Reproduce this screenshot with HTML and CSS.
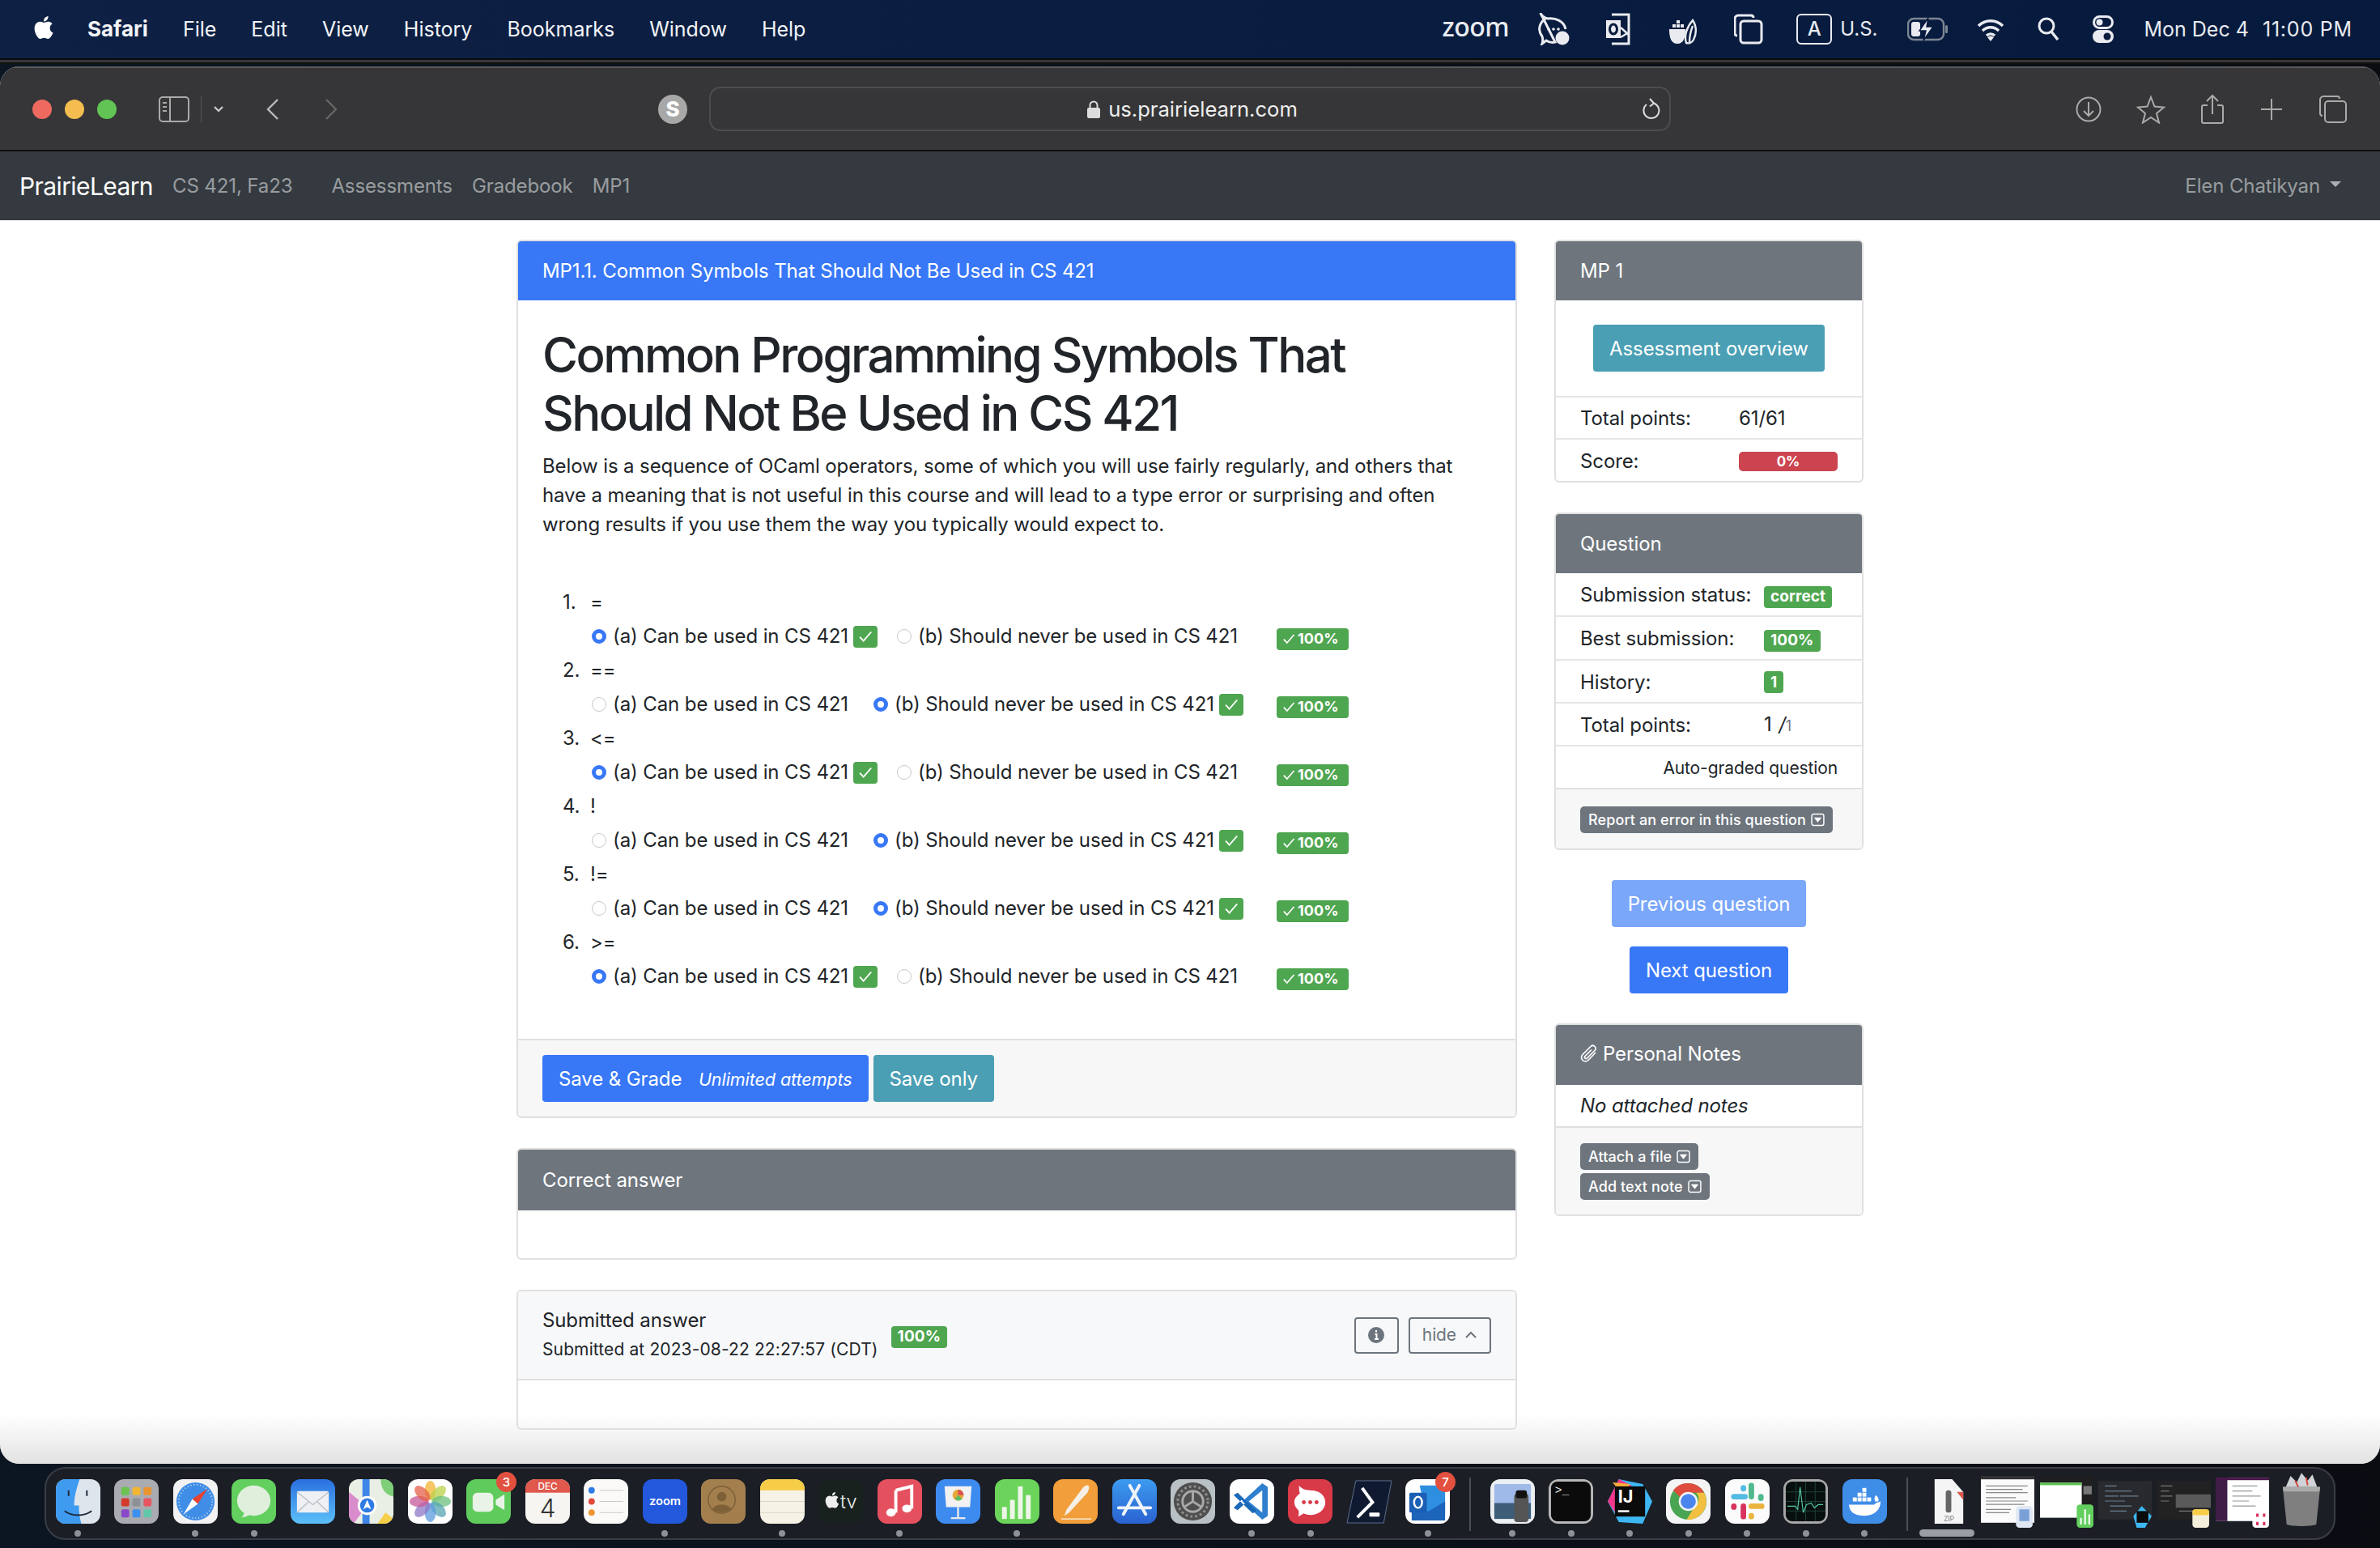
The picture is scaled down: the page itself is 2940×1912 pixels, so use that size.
FILE: index.html
```html
<!DOCTYPE html>
<html lang="en">
<head>
    <meta charset="UTF-8">
    <title>PrairieLearn - MP1.1</title>
    <link rel="stylesheet" href="styles.css">
</head>
<body>
    <svg class="sprite" width="0" height="0">
        <symbol id="tick" viewBox="0 0 16 16"><path d="M2.5 8.5l3.6 4L13.8 3.6" fill="none" stroke="#fff" stroke-width="1.5"/></symbol>
        <symbol id="caretbox" viewBox="0 0 16 16"><rect x="1" y="1.5" width="14" height="13" rx="2" fill="none" stroke="#fff" stroke-width="1.4"/><path d="M3.5 5.500h9L8 11z" fill="#fff"/></symbol>
        <symbol id="apple" viewBox="0 0 24 24"><path d="M12.152 6.896c-.948 0-2.415-1.078-3.96-1.04-2.04.027-3.91 1.183-4.961 3.014-2.117 3.675-.546 9.103 1.519 12.09 1.013 1.454 2.208 3.09 3.792 3.039 1.52-.065 2.09-.987 3.935-.987 1.831 0 2.35.987 3.96.948 1.637-.026 2.676-1.48 3.676-2.948 1.156-1.688 1.636-3.325 1.662-3.415-.039-.013-3.182-1.221-3.22-4.857-.026-3.04 2.48-4.494 2.597-4.559-1.429-2.09-3.623-2.324-4.39-2.376-2-.156-3.675 1.09-4.61 1.09zM15.53 3.83c.843-1.012 1.4-2.427 1.245-3.83-1.207.052-2.662.805-3.532 1.818-.78.896-1.454 2.338-1.273 3.714 1.338.104 2.715-.688 3.559-1.701" fill="currentColor"/></symbol>
    </svg>

    <header class="menubar">
        <svg class="apple"><use href="#apple"/></svg>
        <nav class="menu-left">
            <b>Safari</b><span>File</span><span>Edit</span><span>View</span><span>History</span><span>Bookmarks</span><span>Window</span><span>Help</span>
        </nav>
        <div class="menu-right">
            <span class="zoomword">zoom</span>
            <svg class="mi m-bubble" width="39" height="40" viewBox="0 0 39 40"><path d="M3 1c2 3 5 5 9 6 10-1 20 3 22 13M21 36c-4 1-8 0-11-2l-5 4c1-3 1-6 0-9-3-4-4-8-3-12 1-4 3-7 6-9-2-2-4-4-5-8z" fill="none" stroke="currentColor" stroke-width="3"/><circle cx="13" cy="20" r="1.800" fill="currentColor"/><circle cx="19" cy="20" r="1.800" fill="currentColor"/><circle cx="25" cy="20" r="1.800" fill="currentColor"/><circle cx="30" cy="31" r="8.500" fill="currentColor"/></svg>
            <svg class="mi m-outlook" width="31" height="40" viewBox="0 0 31 40"><path d="M8 2h21v36H8" fill="none" stroke="currentColor" stroke-width="3"/><rect x="1" y="9" width="18" height="22" fill="currentColor"/><ellipse cx="10" cy="20" rx="4.500" ry="6" fill="none" stroke="#0a1c3e" stroke-width="3"/><path d="M19 18l10 9M19 30l10-6" stroke="currentColor" stroke-width="2.500"/></svg>
            <svg class="mi m-leaf" width="36" height="40" viewBox="0 0 36 40"><path d="M1 20h20c0 10-2 18-10 18S1 30 1 20z" fill="currentColor"/><path d="M5 14h4v4H5zM10 14h4v4h-4zM10 9h4v4h-4zM15 14h4v4h-4z" fill="currentColor"/><path d="M30 9c5 8 5 16 1 24-2 4-6 5-9 4-3-9 1-20 8-28zM26 36c0-8 2-15 4-20" fill="none" stroke="currentColor" stroke-width="2.400"/></svg>
            <svg class="mi" width="36" height="38" viewBox="0 0 36 38"><rect x="8" y="9" width="26" height="27" rx="4" fill="none" stroke="currentColor" stroke-width="3"/><path d="M4 27c-2 0-3-1-3-3V6c0-2 2-4 4-4h16c2 0 3 1 3 3" fill="none" stroke="currentColor" stroke-width="3"/></svg>
            <span class="kbd-group"><span class="kbd">A</span><span>U.S.</span></span>
            <svg class="mi m-batt" width="50" height="30" viewBox="0 0 50 30"><rect x="1" y="2" width="44" height="26" rx="7" fill="none" stroke="#7d8694" stroke-width="2.400"/><rect x="47" y="10" width="3" height="10" rx="1.500" fill="#7d8694"/><rect x="5" y="6" width="11" height="18" rx="3" fill="currentColor"/><path d="M26 1L15 17h8l-3 12 12-17h-8z" fill="currentColor" stroke="#0a1c3e" stroke-width="1.500"/></svg>
            <svg class="mi" width="34" height="30" viewBox="0 0 34 30"><path d="M2 11a21 21 0 0130 0M7 17a14 14 0 0120 0M12 23a7 7 0 0110 0" fill="none" stroke="currentColor" stroke-width="3.400"/><path d="M17 30l-4-5a6 6 0 018 0z" fill="currentColor"/></svg>
            <svg class="mi" width="27" height="30" viewBox="0 0 27 30"><circle cx="11" cy="11" r="9" fill="none" stroke="currentColor" stroke-width="3"/><path d="M17 18l8 10" stroke="currentColor" stroke-width="3.400"/></svg>
            <svg class="mi m-ctrl" width="26" height="34" viewBox="0 0 26 34"><rect x="1.500" y="1.500" width="23" height="14" rx="7" fill="none" stroke="currentColor" stroke-width="3"/><circle cx="8.500" cy="8.500" r="4" fill="currentColor"/><rect y="18" width="26" height="16" rx="8" fill="currentColor"/><circle cx="18" cy="26" r="4.500" fill="#0a1c3e"/></svg>
            <span class="clock"><span>Mon Dec 4</span><span class="time">11:00 PM</span></span>
        </div>
    </header>

    <div class="window">
        <div class="toolbar">
            <div class="tb-left">
                <i class="light red"></i><i class="light yellow"></i><i class="light green"></i>
                <svg class="tb-sidebar" width="38" height="32" viewBox="0 0 38 32"><rect x="1" y="1" width="36" height="30" rx="4" fill="none" stroke="#aaa" stroke-width="2"/><path d="M14 1v30" stroke="#aaa" stroke-width="2"/><path d="M5 8h5M5 13h5M5 18h5" stroke="#aaa" stroke-width="2"/></svg>
                <span class="tb-sep"></span>
                <svg class="tb-chev" width="14" height="10" viewBox="0 0 14 10"><path d="M2 2l5 5 5-5" fill="none" stroke="#ccc" stroke-width="2.200"/></svg>
                <svg class="tb-back" width="18" height="28" viewBox="0 0 18 28"><path d="M15 2L3 14l12 12" fill="none" stroke="#bbb" stroke-width="2.400"/></svg>
                <svg class="tb-fwd" width="18" height="28" viewBox="0 0 18 28"><path d="M3 2l12 12L3 26" fill="none" stroke="#666" stroke-width="2.400"/></svg>
                <span class="ext-s">S</span>
            </div>
            <div class="address">
                <span></span>
                <span class="url">
                    <svg width="16" height="22" viewBox="0 0 16 22"><rect y="9" width="16" height="13" rx="2" fill="#ddd"/><path d="M3.500 9V6a4.500 4.500 0 019 0v3" fill="none" stroke="#ddd" stroke-width="2"/></svg>
                    us.prairielearn.com
                </span>
                <svg class="reload" width="24" height="28" viewBox="0 0 24 28"><path d="M15 6.500A9.500 9.500 0 1 1 6 8" fill="none" stroke="#ddd" stroke-width="2"/><path d="M10 1l5 5.500-5 4" fill="none" stroke="#ddd" stroke-width="2"/></svg>
            </div>
            <div class="tb-right">
                <svg width="32" height="34" viewBox="0 0 32 34"><circle cx="16" cy="17" r="14.500" fill="none" stroke="#aaa" stroke-width="2"/><path d="M16 8v17M10 19l6 6 6-6" fill="none" stroke="#aaa" stroke-width="2"/></svg>
                <svg width="36" height="36" viewBox="0 0 36 36"><path d="M18 3l4.500 11.500L34 15.500l-9 7.500 3 11.500-10-6.500-10 6.500 3-11.500-9-7.500 11.500-1z" fill="none" stroke="#aaa" stroke-width="2"/></svg>
                <svg width="30" height="38" viewBox="0 0 30 38"><path d="M9 14H4a2 2 0 00-2 2v18a2 2 0 002 2h22a2 2 0 002-2V16a2 2 0 00-2-2h-5" fill="none" stroke="#aaa" stroke-width="2"/><path d="M15 25V2M8 9l7-7 7 7" fill="none" stroke="#aaa" stroke-width="2"/></svg>
                <svg width="30" height="30" viewBox="0 0 30 30"><path d="M15 2v26M2 15h26" stroke="#aaa" stroke-width="2"/></svg>
                <svg width="36" height="36" viewBox="0 0 36 36"><rect x="8" y="8" width="26" height="26" rx="4" fill="none" stroke="#aaa" stroke-width="2"/><path d="M5 26c-2 0-3-1-3-3V6c0-2 2-4 4-4h17c2 0 3 1 3 3" fill="none" stroke="#aaa" stroke-width="2"/></svg>
            </div>
        </div>

        <nav class="navbar">
            <span class="brand">PrairieLearn</span>
            <span class="nav-course">CS 421, Fa23</span>
            <span class="nav-link">Assessments</span>
            <span class="nav-link">Gradebook</span>
            <span class="nav-link">MP1</span>
            <span class="nav-user">Elen Chatikyan <i class="caret"></i></span>
        </nav>

        <main class="page">
            <section class="col-main">
                <div class="card">
                    <div class="card-header blue">MP1.1. Common Symbols That Should Not Be Used in CS 421</div>
                    <div class="card-body question">
                        <h1>Common Programming Symbols That Should Not Be Used in CS 421</h1>
                        <p>Below is a sequence of OCaml operators, some of which you will use fairly regularly, and others that have a meaning that is not useful in this course and will lead to a type error or surprising and often wrong results if you use them the way you typically would expect to.</p>
                        <ol class="symbols">
                            <li>=
                                <div class="opt-row">
                                    <div class="opts">
                                        <label class="opt has-check"><i class="radio on"></i>(a) Can be used in CS 421<span class="checkbox"><svg><use href="#tick"/></svg></span></label>
                                        <label class="opt"><i class="radio"></i>(b) Should never be used in CS 421</label>
                                    </div>
                                    <span class="badge score"><svg><use href="#tick"/></svg>100%</span>
                                </div>
                            </li>
                            <li>==
                                <div class="opt-row">
                                    <div class="opts">
                                        <label class="opt"><i class="radio"></i>(a) Can be used in CS 421</label>
                                        <label class="opt has-check"><i class="radio on"></i>(b) Should never be used in CS 421<span class="checkbox"><svg><use href="#tick"/></svg></span></label>
                                    </div>
                                    <span class="badge score"><svg><use href="#tick"/></svg>100%</span>
                                </div>
                            </li>
                            <li>&lt;=
                                <div class="opt-row">
                                    <div class="opts">
                                        <label class="opt has-check"><i class="radio on"></i>(a) Can be used in CS 421<span class="checkbox"><svg><use href="#tick"/></svg></span></label>
                                        <label class="opt"><i class="radio"></i>(b) Should never be used in CS 421</label>
                                    </div>
                                    <span class="badge score"><svg><use href="#tick"/></svg>100%</span>
                                </div>
                            </li>
                            <li>!
                                <div class="opt-row">
                                    <div class="opts">
                                        <label class="opt"><i class="radio"></i>(a) Can be used in CS 421</label>
                                        <label class="opt has-check"><i class="radio on"></i>(b) Should never be used in CS 421<span class="checkbox"><svg><use href="#tick"/></svg></span></label>
                                    </div>
                                    <span class="badge score"><svg><use href="#tick"/></svg>100%</span>
                                </div>
                            </li>
                            <li>!=
                                <div class="opt-row">
                                    <div class="opts">
                                        <label class="opt"><i class="radio"></i>(a) Can be used in CS 421</label>
                                        <label class="opt has-check"><i class="radio on"></i>(b) Should never be used in CS 421<span class="checkbox"><svg><use href="#tick"/></svg></span></label>
                                    </div>
                                    <span class="badge score"><svg><use href="#tick"/></svg>100%</span>
                                </div>
                            </li>
                            <li>&gt;=
                                <div class="opt-row">
                                    <div class="opts">
                                        <label class="opt has-check"><i class="radio on"></i>(a) Can be used in CS 421<span class="checkbox"><svg><use href="#tick"/></svg></span></label>
                                        <label class="opt"><i class="radio"></i>(b) Should never be used in CS 421</label>
                                    </div>
                                    <span class="badge score"><svg><use href="#tick"/></svg>100%</span>
                                </div>
                            </li>
                        </ol>
                    </div>
                    <div class="card-footer main-footer">
                        <button class="btn primary">Save &amp; Grade <em>Unlimited attempts</em></button>
                        <button class="btn info">Save only</button>
                    </div>
                </div>

                <div class="card">
                    <div class="card-header grey answer-head">Correct answer</div>
                    <div class="empty-body"></div>
                </div>

                <div class="card">
                    <div class="submitted-header">
                        <div>
                            <div class="sub-title">Submitted answer</div>
                            <div class="sub-time">Submitted at 2023-08-22 22:27:57 (CDT)</div>
                        </div>
                        <span class="badge sub-badge">100%</span>
                        <span class="btn-outline info-btn"><svg width="20" height="20" viewBox="0 0 20 20"><circle cx="10" cy="10" r="10" fill="#6c757d"/><path d="M10 4v2.500M8.500 9H10.500V15M8 15h5" stroke="#fff" stroke-width="2" fill="none"/></svg></span>
                        <span class="btn-outline">hide <svg width="16" height="10" viewBox="0 0 16 10"><path d="M2 8l6-6 6 6" fill="none" stroke="#6c757d" stroke-width="2"/></svg></span>
                    </div>
                    <div class="empty-body"></div>
                </div>
            </section>

            <aside class="col-side">
                <div class="card">
                    <div class="card-header grey">MP 1</div>
                    <div class="overview"><button class="btn info">Assessment overview</button></div>
                    <div class="row row-a"><span class="k">Total points:</span><span>61/61</span></div>
                    <div class="row row-a"><span class="k">Score:</span><span class="scorebar">0%</span></div>
                </div>

                <div class="card">
                    <div class="card-header grey">Question</div>
                    <div class="row row-b tall"><span class="k">Submission status:</span><span class="badge">correct</span></div>
                    <div class="row row-b tall"><span class="k">Best submission:</span><span class="badge">100%</span></div>
                    <div class="row row-b"><span class="k">History:</span><span class="badge">1</span></div>
                    <div class="row row-b"><span class="k">Total points:</span><span>1 <i class="of">/</i><small>1</small></span></div>
                    <div class="row auto-graded">Auto-graded question</div>
                    <div class="card-footer side-footer">
                        <span class="btn-xs">Report an error in this question <svg><use href="#caretbox"/></svg></span>
                    </div>
                </div>

                <div class="qnav">
                    <button class="btn primary disabled">Previous question</button>
                    <button class="btn primary">Next question</button>
                </div>

                <div class="card">
                    <div class="card-header grey notes-head">
                        <svg width="22" height="24" viewBox="0 0 22 24"><path d="M19 10l-9 9.500c-2 2-5 2-7 0s-2-5 0-7L13 2.500c1.500-1.500 3.500-1.500 5 0s1.500 3.500 0 5L8.500 17c-.8.800-1.800.8-2.500 0-.7-.7-.7-1.700 0-2.500L14 6.500" fill="none" stroke="#fff" stroke-width="1.700"/></svg>
                        Personal Notes
                    </div>
                    <div class="row no-notes">No attached notes</div>
                    <div class="card-footer side-footer notes-foot">
                        <span class="btn-xs">Attach a file <svg><use href="#caretbox"/></svg></span>
                        <span class="btn-xs">Add text note <svg><use href="#caretbox"/></svg></span>
                    </div>
                </div>
            </aside>
        </main>
        <div class="window-fade"></div>
    </div>

    <footer class="dock">
        <div class="dock-item on"><svg class="app" viewBox="0 0 56 56"><rect width="56" height="56" fill="#dfe5ec"/><path d="M0 0h30c-4 12-7 22-7 33h6c0 8 1 16 3 23H0z" fill="#3f9bf0"/><path d="M16 14v7M39 14v7" stroke="#1c2a3a" stroke-width="2"/><path d="M11 40c9 7 25 7 34 0" fill="none" stroke="#1c2a3a" stroke-width="2"/></svg><i></i></div>
        <div class="dock-item"><svg class="app" viewBox="0 0 56 56"><rect width="56" height="56" fill="#a9abb0"/><rect x="9" y="10" width="10" height="10" rx="2" fill="#69c34e"/><rect x="23" y="10" width="10" height="10" rx="2" fill="#f2b632"/><rect x="37" y="10" width="10" height="10" rx="2" fill="#ea9430"/><rect x="9" y="24" width="10" height="10" rx="2" fill="#d43a2c"/><rect x="23" y="24" width="10" height="10" rx="2" fill="#8d9196"/><rect x="37" y="24" width="10" height="10" rx="2" fill="#e75560"/><rect x="9" y="38" width="10" height="10" rx="2" fill="#8a49c9"/><rect x="23" y="38" width="10" height="10" rx="2" fill="#3d90ee"/><rect x="37" y="38" width="10" height="10" rx="2" fill="#62c7a8"/></svg><i class="off"></i></div>
        <div class="dock-item on"><svg class="app" viewBox="0 0 56 56"><rect width="56" height="56" fill="#f2f2f2"/><circle cx="28" cy="28" r="24" fill="#3f8de6"/><circle cx="28" cy="28" r="21" fill="none" stroke="#cfe3f8" stroke-width="2" stroke-dasharray="1 3"/><path d="M43 12L24 25l7 6z" fill="#e8412f"/><path d="M13 44l11-19 7 6z" fill="#fff"/></svg><i></i></div>
        <div class="dock-item on"><svg class="app" viewBox="0 0 56 56"><rect width="56" height="56" fill="#62cf5e"/><ellipse cx="28" cy="27" rx="21" ry="19" fill="#dfefdc"/><path d="M16 40c0 4-1 7-4 8 5 0 9-2 12-4z" fill="#dfefdc"/></svg><i></i></div>
        <div class="dock-item"><svg class="app" viewBox="0 0 56 56"><defs><linearGradient id="mailbg" x1="0" y1="0" x2="0" y2="1"><stop offset="0" stop-color="#2a6fe0"/><stop offset="1" stop-color="#5cc0f8"/></linearGradient></defs><rect width="56" height="56" fill="url(#mailbg)"/><rect x="8" y="15" width="40" height="27" rx="2" fill="#eef0f3"/><path d="M8 16l20 16 20-16M8 42l15-14M48 42L33 28" fill="none" stroke="#b7bcc4" stroke-width="1.200"/></svg><i class="off"></i></div>
        <div class="dock-item"><svg class="app" viewBox="0 0 56 56"><rect width="56" height="56" fill="#e9efe4"/><path d="M0 16l22 18L6 56H0z" fill="#d98ccc"/><path d="M36 56l10-14 10 8v6z" fill="#f5cf48"/><path d="M40 0c0 12 6 20 16 22V0z" fill="#7fcf78"/><path d="M17 0h9v56h-9z" fill="#3f86e8"/><circle cx="23" cy="33" r="12" fill="#fff"/><circle cx="23" cy="33" r="9" fill="#2f7be4"/><path d="M23 26l-5 12 5-3 5 3z" fill="#fff"/></svg><i class="off"></i></div>
        <div class="dock-item"><svg class="app" viewBox="0 0 56 56"><rect width="56" height="56" fill="#fff"/><g transform="translate(28 28)" fill-opacity=".75"><ellipse cy="-14" rx="7" ry="12" fill="#f2b632"/><ellipse cy="-14" rx="7" ry="12" fill="#b9d24a" transform="rotate(45)"/><ellipse cy="-14" rx="7" ry="12" fill="#6cc07e" transform="rotate(90)"/><ellipse cy="-14" rx="7" ry="12" fill="#57a5b2" transform="rotate(135)"/><ellipse cy="-14" rx="7" ry="12" fill="#5c9ade" transform="rotate(180)"/><ellipse cy="-14" rx="7" ry="12" fill="#8e77c5" transform="rotate(225)"/><ellipse cy="-14" rx="7" ry="12" fill="#c5589a" transform="rotate(270)"/><ellipse cy="-14" rx="7" ry="12" fill="#e5604a" transform="rotate(315)"/></g></svg><i class="off"></i></div>
        <div class="dock-item"><svg class="app" viewBox="0 0 56 56"><rect width="56" height="56" fill="#5fcb5c"/><rect x="8" y="17" width="26" height="24" rx="6" fill="#e9f3e7"/><path d="M37 26l11-7v20l-11-7z" fill="#e9f3e7"/></svg><b class="dock-badge">3</b><i class="off"></i></div>
        <div class="dock-item"><svg class="app" viewBox="0 0 56 56"><rect width="56" height="56" fill="#f7f5f2"/><rect width="56" height="17" fill="#e0594c"/><text x="28" y="13" class="t-dec">DEC</text><text x="28" y="48" class="t-day">4</text></svg><i class="off"></i></div>
        <div class="dock-item"><svg class="app" viewBox="0 0 56 56"><rect width="56" height="56" fill="#fbfaf8"/><circle cx="10" cy="14" r="4" fill="#2e7de6"/><circle cx="10" cy="28" r="4" fill="#e24a3b"/><circle cx="10" cy="42" r="4" fill="#ee9732"/><path d="M20 14h30M20 28h30M20 42h30" stroke="#c9c9c9" stroke-width="1.200"/></svg><i class="off"></i></div>
        <div class="dock-item on"><svg class="app" viewBox="0 0 56 56"><rect width="56" height="56" fill="#2358dc"/><text x="28" y="33" class="t-zoom">zoom</text></svg><i></i></div>
        <div class="dock-item"><svg class="app book" viewBox="0 0 56 56"><rect width="56" height="56" fill="#a47f4e"/><circle cx="26" cy="26" r="17" fill="none" stroke="#7e6038" stroke-width="1.500"/><circle cx="26" cy="22" r="6" fill="#7e6038"/><path d="M14 38c3-8 21-8 24 0-6 5-18 5-24 0z" fill="#7e6038"/></svg><i class="off"></i></div>
        <div class="dock-item on"><svg class="app" viewBox="0 0 56 56"><rect width="56" height="56" fill="#f6f3e6"/><rect width="56" height="14" fill="#f7cd47"/><path d="M0 28h56M0 42h56" stroke="#d8d5c9" stroke-width="1"/></svg><i></i></div>
        <div class="dock-item"><svg class="app" viewBox="0 0 56 56"><rect width="56" height="56" fill="#18211e"/><g transform="translate(7 16) scale(.85)" color="#eee"><use href="#apple" width="24" height="24"/></g><text x="38" y="37" class="t-tv">tv</text></svg><i class="off"></i></div>
        <div class="dock-item on"><svg class="app" viewBox="0 0 56 56"><rect width="56" height="56" fill="#e5505f"/><path d="M23 14l20-5v28" fill="none" stroke="#fff" stroke-width="4"/><ellipse cx="17" cy="42" rx="6" ry="5" fill="#fff"/><ellipse cx="37" cy="37" rx="6" ry="5" fill="#fff"/><path d="M23 14v28" stroke="#fff" stroke-width="4"/></svg><i></i></div>
        <div class="dock-item"><svg class="app" viewBox="0 0 56 56"><rect width="56" height="56" fill="#3e8bf0"/><path d="M28 35v13M19 49h18" stroke="#e8e8e8" stroke-width="2.500"/><path d="M11 9h34l-2 26H13z" fill="#f2f2f2"/><circle cx="28" cy="20" r="7" fill="#e6a83a"/><path d="M28 13a7 7 0 017 7h-7z" fill="#d9534f"/><path d="M28 20l5 5a7 7 0 01-9 0z" fill="#5dbb63"/></svg><i class="off"></i></div>
        <div class="dock-item on"><svg class="app" viewBox="0 0 56 56"><rect width="56" height="56" fill="#6bd45a"/><rect x="9" y="35" width="6" height="15" fill="#eef6ea"/><rect x="19" y="26" width="6" height="24" fill="#eef6ea"/><rect x="29" y="9" width="6" height="41" fill="#eef6ea"/><rect x="39" y="20" width="6" height="30" fill="#eef6ea"/></svg><i></i></div>
        <div class="dock-item"><svg class="app" viewBox="0 0 56 56"><rect width="56" height="56" fill="#f29e3a"/><path d="M44 8c2 2 1 5-1 9L20 42l-6 4 3-8L38 10c2-2 4-3 6-2z" fill="#f5efe6"/><path d="M10 50h38" stroke="#f7ddb8" stroke-width="2"/></svg><i class="off"></i></div>
        <div class="dock-item"><svg class="app" viewBox="0 0 56 56"><defs><linearGradient id="storebg" x1="0" y1="0" x2="0" y2="1"><stop offset="0" stop-color="#3c9bf0"/><stop offset="1" stop-color="#2a62d0"/></linearGradient></defs><rect width="56" height="56" fill="url(#storebg)"/><path d="M22 8l20 36M34 8L14 44M8 36h40" stroke="#eef3fa" stroke-width="4" stroke-linecap="round"/></svg><i class="off"></i></div>
        <div class="dock-item"><svg class="app" viewBox="0 0 56 56"><rect width="56" height="56" fill="#b9c1c5"/><circle cx="28" cy="28" r="24" fill="#4f4f4f"/><circle cx="28" cy="28" r="19" fill="none" stroke="#8f8f8f" stroke-width="3" stroke-dasharray="3 3"/><circle cx="28" cy="28" r="13" fill="none" stroke="#a8a8a8" stroke-width="3"/><path d="M28 28V15M28 28l11 7M28 28l-11 7" stroke="#a8a8a8" stroke-width="3"/></svg><i class="off"></i></div>
        <div class="dock-item on"><svg class="app" viewBox="0 0 56 56"><rect width="56" height="56" fill="#fff"/><path d="M41 5l7 5v36l-7 5-25-23z" fill="#2f7fce"/><path d="M41 14v28L24 28z" fill="#fff"/><path d="M5 20l5-3 24 23-5 3zM5 36l5 3 10-9-5-4z" fill="#1c69b8"/></svg><i></i></div>
        <div class="dock-item on"><svg class="app" viewBox="0 0 56 56"><rect width="56" height="56" fill="#d93a48"/><path d="M14 8c3 4 7 6 14 6 11 0 19 6 19 15s-8 16-19 16c-4 0-6-1-8-2l-7 4c1-4 1-6 0-8-3-3-5-6-5-10 0-5 3-8 7-11-1-3-1-6-1-10z" fill="#fff"/><circle cx="20" cy="29" r="2.500" fill="#d93a48"/><circle cx="28" cy="29" r="2.500" fill="#d93a48"/><circle cx="36" cy="29" r="2.500" fill="#d93a48"/></svg><i></i></div>
        <div class="dock-item"><svg class="app plain" viewBox="0 0 56 56"><path d="M11 2h45l-10 53H0z" fill="#0f1a30" stroke="#5d6e8f"/><path d="M19 11l13 18-19 19" fill="none" stroke="#fff" stroke-width="4"/><rect x="28" y="42" width="13" height="5" rx="1" fill="#fff"/></svg><i class="off"></i></div>
        <div class="dock-item on"><svg class="app" viewBox="0 0 56 56"><rect width="56" height="56" fill="#fff"/><path d="M18 8h32v36H26z" fill="#2e8fe0"/><path d="M8 28l20 13 22-13v24H8z" fill="#1d64bb"/><rect x="5" y="17" width="22" height="25" rx="2" fill="#1a5fb4"/><ellipse cx="16" cy="29" rx="5" ry="7" fill="none" stroke="#fff" stroke-width="2.500"/></svg><b class="dock-badge">7</b><i></i></div>
        <div class="dock-sep"></div>
        <div class="dock-item on"><svg class="app" viewBox="0 0 56 56"><rect width="56" height="56" fill="#eceff2"/><rect x="5" y="6" width="46" height="44" rx="2" fill="#9fb9e8"/><rect x="5" y="30" width="46" height="20" fill="#3d5d78"/><rect x="30" y="18" width="18" height="36" rx="4" fill="#555"/><rect x="32" y="14" width="14" height="10" rx="3" fill="#111"/></svg><i></i></div>
        <div class="dock-item on"><svg class="app" viewBox="0 0 56 56"><rect width="56" height="56" fill="#b8b8b8"/><rect x="3" y="3" width="50" height="50" rx="8" fill="#0b0b0b"/><text x="8" y="18" class="t-term">&gt;_</text></svg><i></i></div>
        <div class="dock-item on"><svg class="app plain ij" viewBox="0 0 56 56"><path d="M14 0l30 6 12 22-12 28-30-2L0 28z" fill="#3db7f2"/><path d="M14 0l16 8L12 46 0 28z" fill="#f2378c"/><path d="M6 4l22 2-8 14z" fill="#fbb03b"/><rect x="9" y="9" width="38" height="38" fill="#0b0b0b"/><text x="13" y="30" class="t-ij">IJ</text><rect x="13" y="39" width="14" height="2.500" fill="#fff"/></svg><i></i></div>
        <div class="dock-item on"><svg class="app" viewBox="0 0 56 56"><rect width="56" height="56" fill="#f4f4f4"/><circle cx="28" cy="28" r="23" fill="#4aa553"/><path d="M28 5a23 23 0 0120 12H28a11 11 0 00-10 6L9 14A23 23 0 0128 5z" fill="#de4c3e"/><path d="M48 17a23 23 0 01-22 34l10-17a11 11 0 002-17z" fill="#f4c042"/><circle cx="28" cy="28" r="12" fill="#f4f4f4"/><circle cx="28" cy="28" r="9.500" fill="#4a85ee"/></svg><i></i></div>
        <div class="dock-item on"><svg class="app" viewBox="0 0 56 56"><rect width="56" height="56" fill="#fbfbfb"/><path d="M33 8v14M45 22v2" stroke="#4fb88c" stroke-width="7" stroke-linecap="round"/><path d="M11 22h14M23 11v1" stroke="#53bce4" stroke-width="7" stroke-linecap="round"/><path d="M23 34v13M11 34v1" stroke="#d8335c" stroke-width="7" stroke-linecap="round"/><path d="M33 34h13M33 46v1" stroke="#e9b440" stroke-width="7" stroke-linecap="round"/></svg><i></i></div>
        <div class="dock-item on"><svg class="app" viewBox="0 0 56 56"><rect width="56" height="56" fill="#a8a8a8"/><rect x="3" y="3" width="50" height="50" rx="8" fill="#07100e"/><path d="M3 16h50M3 28h50M3 40h50M16 3v50M28 3v50M40 3v50" stroke="#1e4038" stroke-width="1"/><path d="M5 34h10l3 4 3-28 4 32 4-10 6-2 4 6 5-4h6" fill="none" stroke="#55c7a0" stroke-width="1.200"/></svg><i></i></div>
        <div class="dock-item on"><svg class="app" viewBox="0 0 56 56"><rect width="56" height="56" fill="#3e8de6"/><path d="M8 32h32c2-3 6-3 8-4 0 10-8 18-20 18S9 42 8 32z" fill="#fff"/><g fill="#fff"><rect x="13" y="23" width="5" height="5"/><rect x="19" y="23" width="5" height="5"/><rect x="25" y="23" width="5" height="5"/><rect x="31" y="23" width="5" height="5"/><rect x="19" y="17" width="5" height="5"/><rect x="25" y="17" width="5" height="5"/><rect x="25" y="11" width="5" height="5"/></g><path d="M42 20c3 2 4 5 3 8h-4c-1-3-1-6 1-8z" fill="#fff"/></svg><i></i></div>
        <div class="dock-sep"></div>
        <div class="dock-item"><svg class="app plain" viewBox="0 0 56 56"><path d="M10 0h22l14 16v40H10z" fill="#f5f5f5"/><path d="M10 16h36v10l-8-10H10z" fill="#d9574a"/><rect x="24" y="14" width="7" height="28" rx="3" fill="#666"/><text x="28" y="53" class="t-zip">ZIP</text></svg><span class="stack-pill"></span></div>
        <div class="dock-item"><svg class="app plain thumb" viewBox="0 0 64 64"><rect y="2" width="64" height="6" fill="#333"/><rect y="6" width="64" height="52" fill="#fafafa"/><path d="M6 14h50M6 18h44M6 22h50M6 28h36M6 32h50M6 36h46M6 42h30M6 46h28" stroke="#888" stroke-width="1.200"/><rect x="42" y="38" width="20" height="26" rx="4" fill="#dfe7f3"/><rect x="46" y="42" width="12" height="14" fill="#7ba0d8"/></svg><i class="off"></i></div>
        <div class="dock-item"><svg class="app plain thumb" viewBox="0 0 64 64"><rect y="2" width="64" height="50" fill="#1f1f1f"/><rect y="10" width="50" height="42" fill="#fff"/><rect y="10" width="50" height="3" fill="#5dc24f"/><rect x="52" y="14" width="10" height="10" fill="#777"/><rect x="44" y="36" width="20" height="28" rx="4" fill="#62cf5e"/><path d="M49 60v-8M54 60V42M59 60V48" stroke="#fff" stroke-width="2"/></svg><i class="off"></i></div>
        <div class="dock-item"><svg class="app plain thumb" viewBox="0 0 64 64"><rect y="8" width="64" height="46" fill="#282a2e"/><path d="M8 14h14M8 20h20M8 26h16M8 32h24M26 20h14M26 26h22M14 38h26M14 44h20" stroke="#6c7f8e" stroke-width="1.200"/><path d="M42 50l10-12 12 12-8 14H46z" fill="#3db7f2"/><rect x="46" y="44" width="14" height="14" fill="#0b0b0b"/></svg><i class="off"></i></div>
        <div class="dock-item"><svg class="app plain thumb" viewBox="0 0 64 64"><rect y="8" width="64" height="46" fill="#222"/><rect x="22" y="24" width="42" height="16" fill="#5a5a5a"/><path d="M4 14h14M4 20h10M4 26h14M4 32h10M26 44h30" stroke="#777" stroke-width="1.200"/><rect x="42" y="42" width="20" height="22" rx="4" fill="#f4efdc"/><rect x="42" y="42" width="20" height="7" rx="3" fill="#f7cd47"/></svg><i class="off"></i></div>
        <div class="dock-item"><svg class="app plain thumb" viewBox="0 0 64 64"><rect y="4" width="64" height="52" fill="#fff"/><rect y="4" width="14" height="52" fill="#3f1d47"/><rect y="4" width="64" height="3" fill="#4a154b"/><path d="M20 14h30M20 20h24M20 26h34M20 32h20M20 38h28" stroke="#999" stroke-width="1.200"/><rect x="44" y="42" width="20" height="22" rx="4" fill="#fff"/><path d="M50 47v4M58 47v4M50 57v4M58 57v4" stroke="#d8335c" stroke-width="3"/></svg><i class="off"></i></div>
        <div class="dock-item"><svg class="app plain trash" viewBox="0 0 56 72"><path d="M4 20h48l-5 48c-4 3-34 3-38 0z" fill="#7f7f7f"/><path d="M4 20h48l-1 6H5z" fill="#aaa"/><path d="M8 20l6-14 8 8 6-12 8 10 6-8 6 16z" fill="#cfd2d6"/><path d="M20 12l4 8M34 8l2 10" stroke="#d8423a" stroke-width="2"/></svg><i class="off"></i></div>
    </footer>
</body>
</html>
```

FILE: styles.css
```css
* { box-sizing: border-box; }
html, body { margin: 0; padding: 0; }
body { width: 2940px; height: 1912px; overflow: hidden; font-family: Inter, "Liberation Sans", sans-serif; font-size: 24px; line-height: 36px; letter-spacing: -.11px; color: #212529; background: linear-gradient(90deg, #0b1622, #0a0c12); }
.sprite { position: absolute; }
button { font-family: inherit; letter-spacing: inherit; }

/* mac menu bar */
.menubar { height: 72px; display: flex; align-items: center; padding-left: 40px; background: linear-gradient(90deg, #0e2144, #061a3d); color: #f2f4f8; font-size: 25px; letter-spacing: 0; }
.apple { width: 28px; height: 34px; color: #fff; margin-right: 40px; margin-top: -4px; }
.menu-left { display: flex; gap: 43px; }
.menu-left b { font-weight: 700; font-size: 26px; }
.menu-right { margin-left: auto; display: flex; align-items: center; gap: 41px; padding-right: 34px; color: #e9ebf0; }
.zoomword { font-family: "Noto Sans", sans-serif; font-size: 32px; font-weight: 500; margin-top: -6px; margin-right: -5px; letter-spacing: -.5px; }
.m-outlook { margin-left: 3px; }
.m-leaf { margin-left: 6px; margin-right: 4px; }
.m-batt { margin-left: -4px; margin-right: -5px; }
.kbd-group { display: flex; align-items: center; gap: 10px; font-size: 24px; }
.kbd { width: 44px; height: 38px; border: 2px solid #e9ebf0; border-radius: 6px; display: flex; align-items: center; justify-content: center; font-size: 24px; font-weight: 500; }
.clock { display: flex; gap: 17px; margin-left: -4px; }
.time { letter-spacing: .8px; }

/* browser window */
.window { position: relative; height: 1726px; margin-top: 10px; border-radius: 24px; overflow: hidden; background: #fff; }
.menubar { box-shadow: 0 2px 0 #0b0b0d, 0 5px 0 #37373a, 0 7px 0 #111; position: relative; z-index: 2; }
.toolbar { height: 105px; display: flex; align-items: center; background: #363638; border-top: 2px solid #5a5a5c; border-bottom: 2px solid #0f0f10; }
.tb-left { width: 876px; display: flex; align-items: center; padding-left: 40px; }
.light { width: 24px; height: 24px; border-radius: 50%; margin-right: 16px; }
.red { background: #ee6a5f; }
.yellow { background: #f5bd4f; }
.green { background: #61c454; }
.tb-sidebar { margin-left: 36px; }
.tb-sep { width: 1px; height: 34px; background: #555; margin: 0 14px; }
.tb-chev { margin-right: 50px; }
.tb-back { margin-left: 1px; }
.tb-fwd { margin-left: 54px; }
.ext-s { width: 36px; height: 36px; margin-left: 395px; border-radius: 50%; background: #a8a8a8; color: #fff; font-weight: 800; font-size: 26px; line-height: 36px; text-align: center; }
.address { width: 1188px; height: 55px; border: 2px solid #4d4d4f; border-radius: 14px; display: grid; grid-template-columns: 1fr auto 1fr; align-items: center; color: #eee; font-size: 25.600px; padding-right: 10px; letter-spacing: 0; }
.url { display: flex; align-items: center; gap: 10px; margin-left: 16px; }
.reload { justify-self: end; }
.tb-right { display: flex; align-items: center; gap: 43px; padding-left: 500px; }

/* navbar */
.navbar { height: 85px; display: flex; align-items: center; background: #343a40; padding: 0 24px; color: rgba(255,255,255,.5); }
.brand { color: #fff; font-size: 30px; margin-right: 24px; letter-spacing: -.6px; }
.nav-course { margin-right: 48px; }
.nav-link { margin-right: 24px; }
.nav-user { margin-left: auto; margin-right: 24px; display: flex; align-items: center; gap: 12px; }
.caret { width: 0; height: 0; border: 7px solid transparent; border-top-color: rgba(255,255,255,.6); border-bottom: 0; margin-top: -4px; }

/* page columns */
.page { display: flex; gap: 46px; padding: 24px 0 0 638px; }
.col-main { width: 1236px; display: flex; flex-direction: column; gap: 37px; }
.col-side { width: 382px; display: flex; flex-direction: column; gap: 37px; }

.card { border: 2px solid #e0e0e0; border-radius: 6px; background: #fff; overflow: hidden; }
.card-header { height: 73px; padding: 0 30px; display: flex; align-items: center; color: #fff; }
.blue { background: #3878f7; }
.grey { background: #6e757d; }
.card-footer { background: #f7f7f7; border-top: 2px solid #e0e0e0; }
.empty-body { height: 59px; }
.answer-head { height: 75px; }

.question { padding: 31px 30px 56px; }
h1 { margin: 0 0 12px; font-size: 60px; line-height: 72px; font-weight: 500; width: 1100px; letter-spacing: -2.550px; }
.question p { margin: 0 0 57px; }
.symbols { margin: 0; padding-left: 61px; line-height: 42px; list-style: none; counter-reset: sym; }
.symbols li { counter-increment: sym; }
.symbols li::before { content: counter(sym) "."; display: inline-block; width: 34px; margin-left: -36px; }
.opt-row { display: flex; align-items: center; height: 42px; }
.opts { width: 846px; display: flex; align-items: center; }
.opt { display: flex; align-items: center; margin-right: 31px; }
.has-check { margin-right: 24px; }
.radio { width: 18px; height: 18px; border-radius: 50%; border: 1px solid #c8c8c8; margin-right: 8px; background: #fff; }
.radio.on { border: 5px solid #3878f7; }
.checkbox { width: 30px; height: 27px; margin-left: 6px; background: #4fa650; border-radius: 4px; display: flex; align-items: center; justify-content: center; }
.checkbox svg { width: 20px; height: 20px; }

.badge { display: inline-block; padding: 4.500px 8px; font-size: 19px; font-weight: 700; line-height: 18px; letter-spacing: .1px; color: #fff; background: #4fa650; border-radius: 4px; }
.score { display: flex; align-items: center; gap: 2px; width: 89px; height: 27px; margin-top: 6px; padding: 0 6px; white-space: nowrap; font-size: 18px; }
.score svg { width: 18px; height: 18px; flex: none; }

.btn { height: 58px; border: 0; border-radius: 4px; padding: 0 20px; font-size: 24px; color: #fff; }
.primary { background: #3878f7; }
.info { background: #4b9fb4; }
.disabled { background: #7ba7fa; }
.main-footer { height: 96px; display: flex; align-items: center; gap: 6px; padding: 0 30px; }
.main-footer em { font-size: 21.600px; margin-left: 14px; }

.submitted-header { height: 110px; display: flex; align-items: center; padding: 0 30px; background: #f7f8f9; border-bottom: 2px solid #e0e0e0; }
.sub-title { line-height: 36px; }
.sub-time { font-size: 21px; line-height: 36px; letter-spacing: .12px; }
.sub-badge { margin-left: 16px; margin-right: auto; margin-top: 4px; }
.btn-outline { height: 45px; border: 2px solid #6c757d; border-radius: 4px; color: #6c757d; display: flex; align-items: center; gap: 10px; padding: 0 15px; margin-left: 12px; font-size: 21px; }
.info-btn { width: 55px; justify-content: center; padding: 0; }

/* sidebar */
.overview { height: 120px; display: flex; align-items: center; justify-content: center; border-bottom: 2px solid #e6e6e6; }
.row { display: flex; align-items: center; padding: 2px 30px 0; border-bottom: 2px solid #e6e6e6; }
.row:last-child { border-bottom: 0; }
.row-a { height: 52px; }
.row-a:last-child { height: 51px; }
.row-a .k { width: 196px; }
.row-b { height: 53px; }
.row-b.tall { height: 54px; }
.row-b.tall .badge { margin-top: 4px; }
.row-b .k { width: 227px; }
.scorebar { width: 122px; height: 24px; background: #cc4450; border-radius: 5px; color: #fff; font-size: 17px; font-weight: 700; line-height: 24px; text-align: center; }
.of { margin-left: 2px; }
small { font-size: 18px; color: #6c757d; }
.auto-graded { height: 51px; justify-content: flex-end; font-size: 21px; border-bottom: 0; padding-top: 3px; }
.side-footer { height: 75px; padding: 18px 30px; }
.btn-xs { display: inline-flex; align-items: center; gap: 6px; height: 33px; padding: 0 10px; background: #6e757d; color: #fff; border-radius: 5px; font-size: 18px; line-height: 33px; white-space: nowrap; font-weight: 500; letter-spacing: .1px; }
.btn-xs svg { width: 17px; height: 17px; }
.qnav { display: flex; flex-direction: column; align-items: center; gap: 24px; }
.notes-head { gap: 6px; height: 74px; padding-bottom: 3px; }
.no-notes { height: 51px; font-style: italic; border-bottom: 0; padding-top: 0; }
.notes-foot { height: 109px; display: flex; flex-direction: column; align-items: flex-start; gap: 4px; padding: 19px 30px; }

/* shadow of the dock falling over the page */
.window-fade { position: absolute; left: 0; right: 0; bottom: 0; height: 60px; background: linear-gradient(rgba(225,225,225,0), #e2e2e2); pointer-events: none; }

/* dock */
.dock { width: 2830px; height: 90px; margin: 4px 0 0 55px; display: flex; padding-left: 3px; background: #1b1e25; border: 2px solid #3a3d44; border-radius: 26px; }
.dock-item { position: relative; width: 72.500px; flex: none; display: flex; flex-direction: column; align-items: center; padding-top: 13px; }
.app { width: 55px; height: 55px; border-radius: 12px; flex: none; }
.app.plain { border-radius: 0; overflow: visible; }
.app.thumb { width: 66px; height: 66px; margin-top: -6px; }
.app.trash { width: 54px; height: 70px; margin-top: -10px; }
.dock-item i { width: 8px; height: 8px; margin-top: 8px; border-radius: 50%; background: #8e9197; }
.dock-item i.off { visibility: hidden; }
.dock-badge { position: absolute; top: 4px; right: 2px; width: 25px; height: 25px; border-radius: 50%; background: #e2503f; color: #fff; font-size: 15px; font-weight: 500; line-height: 25px; text-align: center; }
.dock-sep { width: 32px; flex: none; position: relative; }
.dock-sep::after { content: ""; display: block; width: 2px; height: 66px; margin: 11px auto 0; background: #4c4f55; }
.stack-pill { position: absolute; bottom: 2px; left: -1px; width: 68px; height: 9px; border-radius: 5px; background: #9a9da3; }
.t-dec { font-size: 12px; fill: #fff; text-anchor: middle; font-weight: 500; }
.t-day { font-size: 32px; fill: #333; text-anchor: middle; font-weight: 300; }
.t-zoom { font-size: 15px; fill: #fff; text-anchor: middle; font-weight: 600; }
.t-tv { font-size: 24px; fill: #eee; text-anchor: middle; font-weight: 300; }
.t-term { font-size: 15px; fill: #eee; font-family: "Liberation Mono", monospace; }
.t-ij { font-size: 22px; fill: #fff; font-weight: 700; }
.t-zip { font-size: 9px; fill: #888; text-anchor: middle; }
```
